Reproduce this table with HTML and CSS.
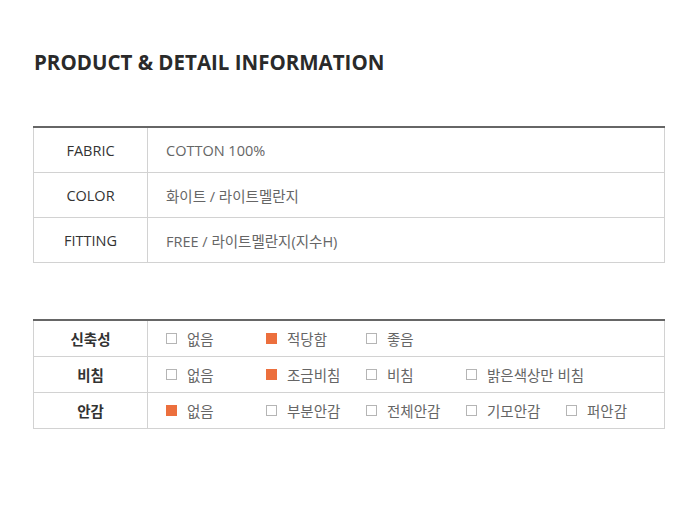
FILE: index.html
```html
<!DOCTYPE html>
<html lang="ko">
<head>
<meta charset="utf-8">
<link rel="stylesheet" href="styles.css">
</head>
<body>
<div class="page">
  <h1 class="title">PRODUCT &amp; DETAIL INFORMATION</h1>
  <table class="info">
    <colgroup><col class="c1"><col></colgroup>
    <tr><th>FABRIC</th><td>COTTON 100%</td></tr>
    <tr><th>COLOR</th><td>화이트 / 라이트멜란지</td></tr>
    <tr><th>FITTING</th><td>FREE / 라이트멜란지(지수H)</td></tr>
  </table>
  <table class="info detail">
    <colgroup><col class="c1"><col></colgroup>
    <tr><th>신축성</th><td><div class="opts">
      <span class="opt"><i class="box"></i>없음</span>
      <span class="opt"><i class="box on"></i>적당함</span>
      <span class="opt"><i class="box"></i>좋음</span>
    </div></td></tr>
    <tr><th>비침</th><td><div class="opts">
      <span class="opt"><i class="box"></i>없음</span>
      <span class="opt"><i class="box on"></i>조금비침</span>
      <span class="opt"><i class="box"></i>비침</span>
      <span class="opt"><i class="box"></i>밝은색상만 비침</span>
    </div></td></tr>
    <tr><th>안감</th><td><div class="opts">
      <span class="opt"><i class="box on"></i>없음</span>
      <span class="opt"><i class="box"></i>부분안감</span>
      <span class="opt"><i class="box"></i>전체안감</span>
      <span class="opt"><i class="box"></i>기모안감</span>
      <span class="opt"><i class="box"></i>퍼안감</span>
    </div></td></tr>
  </table>
</div>
</body>
</html>
```
FILE: styles.css
```css
html, body {
  margin: 0;
  padding: 0;
  background: #fff;
}
.page {
  padding: 47px 35px 0 33px;
  font-family: "Open Sans", "Noto Sans CJK KR", sans-serif;
}
.title {
  margin: 0 0 0 1px;
  font-size: 20.5px;
  line-height: 30px;
  font-weight: 700;
  color: #2a2a2a;
  letter-spacing: 0;
}
.info {
  width: 632px;
  table-layout: fixed;
  border-collapse: collapse;
  border-top: 2px solid #666;
  margin-top: 49px;
  font-size: 14.5px;
}
.c1 {
  width: 114px;
}
.info th, .info td {
  border: 1px solid #d2d2d2;
  height: 44px;
  padding: 0;
}
.info tr:first-child th, .info tr:first-child td {
  border-top: none;
}
.info th {
  font-weight: 400;
  color: #333;
  text-align: center;
}
.info td {
  color: #666;
  padding-left: 18px;
  text-align: left;
}
.detail {
  margin-top: 56px;
}
.detail th, .detail td {
  height: 35px;
}
.detail th {
  font-weight: 700;
  color: #333;
}
.opts {
  display: flex;
}
.opt {
  width: 100px;
  flex-shrink: 0;
  display: flex;
  align-items: center;
  white-space: nowrap;
}
.box {
  flex-shrink: 0;
  width: 9px;
  height: 9px;
  border: 1px solid #b5b5b5;
  margin-right: 10px;
  box-sizing: content-box;
}
.box.on {
  background: #ec6f3d;
  border-color: #ec6f3d;
}
```
